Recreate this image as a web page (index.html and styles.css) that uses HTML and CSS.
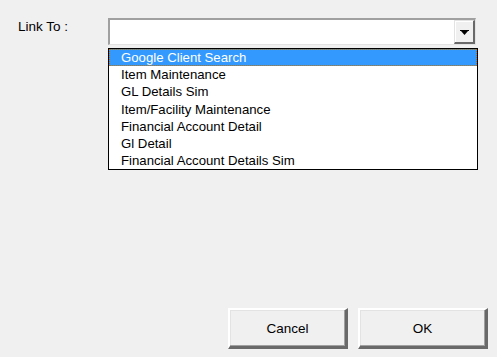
FILE: index.html
```html
<!DOCTYPE html>
<html>
<head>
<meta charset="utf-8">
<link rel="stylesheet" href="styles.css">
</head>
<body>
<div class="dialog">
  <div class="field-row">
    <label class="field-label">Link To :</label>
    <div class="combo">
      <div class="combo-text"></div>
      <div class="combo-btn">
        <svg width="9" height="6" viewBox="0 0 9 6"><path d="M0 0H9V1H0Z M1 1H8L4.5 5Z" fill="#000"/></svg>
      </div>
      <ul class="dropdown">
        <li class="item selected">Google Client Search</li>
        <li class="item">Item Maintenance</li>
        <li class="item">GL Details Sim</li>
        <li class="item">Item/Facility Maintenance</li>
        <li class="item">Financial Account Detail</li>
        <li class="item">Gl Detail</li>
        <li class="item">Financial Account Details Sim</li>
      </ul>
    </div>
  </div>
  <div class="actions">
    <button class="btn btn-cancel">Cancel</button>
    <button class="btn btn-ok">OK</button>
  </div>
</div>
</body>
</html>
```
FILE: styles.css
```css
html, body {
  margin: 0;
  padding: 0;
  background: #f0f0f0;
}
.dialog {
  width: 497px;
  height: 357px;
  display: flex;
  flex-direction: column;
  justify-content: space-between;
  font-family: "Liberation Sans", sans-serif;
  font-size: 13px;
  color: #000;
  box-sizing: border-box;
  padding: 18px 0 8px 0;
}
.field-row {
  display: flex;
  align-items: flex-start;
}
.field-label {
  width: 108px;
  flex: none;
  padding-left: 18px;
  box-sizing: border-box;
  padding-top: 1px;
  font-size: 13.5px;
  line-height: 16px;
}
.combo {
  position: relative;
  width: 368px;
  height: 27px;
  box-sizing: border-box;
  background: #fff;
  border-top: 2px solid #a0a0a0;
  border-left: 2px solid #a0a0a0;
  border-right: 1px solid #e3e3e3;
  border-bottom: 1px solid #e3e3e3;
  display: flex;
  justify-content: flex-end;
}
.combo-text {
  flex: 1;
}
.combo-btn {
  width: 21px;
  height: 24px;
  box-sizing: border-box;
  background: #f0f0f0;
  border-top: 1px solid #e3e3e3;
  border-left: 1px solid #e3e3e3;
  border-right: 2px solid #696969;
  border-bottom: 2px solid #696969;
  box-shadow: inset 1px 1px 0 #fff;
  display: flex;
  align-items: center;
  justify-content: center;
  padding-top: 2px;
}
.dropdown {
  position: absolute;
  left: -2px;
  top: 28px;
  width: 370px;
  margin: 0;
  padding: 0;
  list-style: none;
  background: #fff;
  border: 1px solid #000;
  box-sizing: border-box;
  font-size: 13.2px;
}
.item {
  height: 17.2px;
  line-height: 17px;
  padding-left: 12px;
  box-sizing: border-box;
  white-space: nowrap;
}
.item.selected {
  background: #3399ff;
  color: #fff;
  outline: 1px dotted #c07000;
  outline-offset: -1px;
}
.actions {
  display: flex;
  justify-content: flex-end;
  gap: 10px;
  padding-right: 9px;
}
.btn {
  height: 41px;
  box-sizing: border-box;
  background: #f0f0f0;
  border-top: 2px solid #fff;
  border-left: 2px solid #fff;
  border-right: 3px solid #696969;
  border-bottom: 3px solid #696969;
  box-shadow: inset -1px -1px 0 #a0a0a0, inset 1px 1px 0 #e3e3e3;
  font-family: "Liberation Sans", sans-serif;
  font-size: 13.5px;
  color: #000;
  padding: 0;
}
.btn-cancel {
  width: 120px;
}
.btn-ok {
  width: 130px;
}
```
